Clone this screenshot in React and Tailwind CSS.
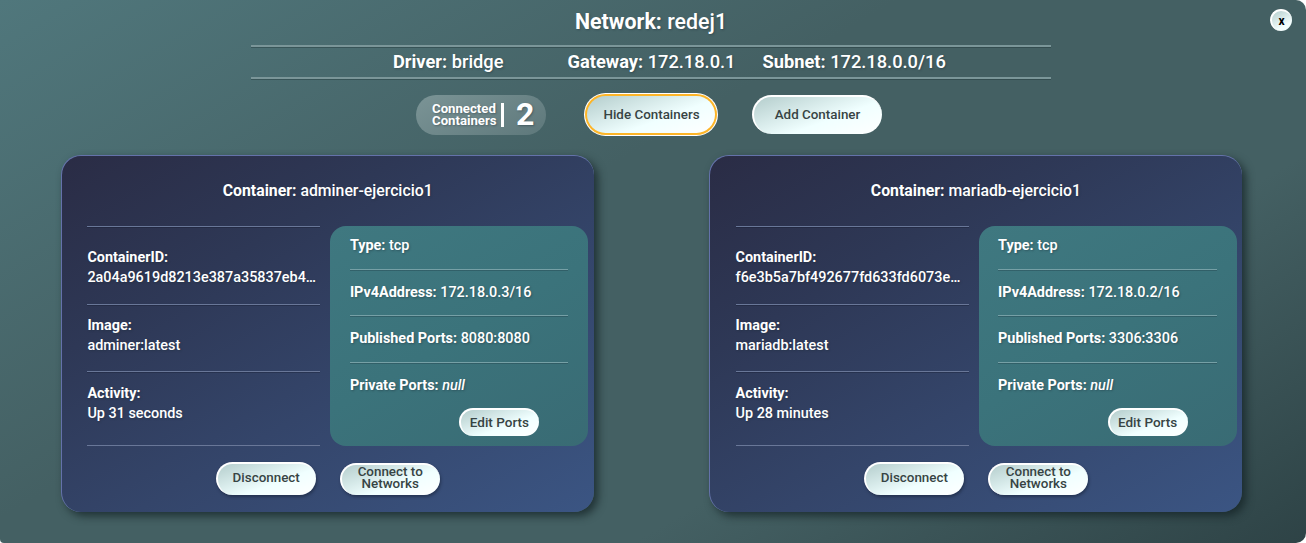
const FACE =
  "flex items-center justify-center rounded-full bg-linear-[160deg,#b4cdcc_0%,#f0ffff_60%,#ffffff_100%] text-center font-medium text-[#374444]";
const PILL = `${FACE} border-t-2 border-l-2 border-white`;
const RULE = "border-t border-[#76a0a6] shadow-[inset_0_1px_0_rgba(25,50,60,0.3)]";

const CONTAINERS = [
  {
    name: "adminer-ejercicio1",
    id: "2a04a9619d8213e387a35837eb4…",
    image: "adminer:latest",
    activity: "Up 31 seconds",
    ip: "172.18.0.3/16",
    ports: "8080:8080",
  },
  {
    name: "mariadb-ejercicio1",
    id: "f6e3b5a7bf492677fd633fd6073e…",
    image: "mariadb:latest",
    activity: "Up 28 minutes",
    ip: "172.18.0.2/16",
    ports: "3306:3306",
  },
];

function Field({ label, value, className }) {
  return (
    <div className={`border-t border-[#697798] shadow-[inset_0_1px_0_rgba(20,25,45,0.35)] ${className}`}>
      <div className="font-bold">{label}</div>
      <div className="whitespace-nowrap">{value}</div>
    </div>
  );
}

function Row({ label, children, className = "" }) {
  return (
    <div className={className}>
      <b>{label}</b> {children}
    </div>
  );
}

function ContainerCard({ item }) {
  return (
    <section className="h-[357px] w-[533px] rounded-[20px] border-t border-l border-[#6472aa] bg-linear-[150deg,#2a2c45_0%,#2e3856_30%,#34456a_60%,#3b5583_100%] text-[14.4px] leading-5 shadow-[4px_4px_8px_rgba(20,35,38,0.75)]">
      <h2 className="h-[70px] pt-[25px] pr-px text-center text-[15.8px] leading-5 font-medium">
        <b>Container:</b> {item.name}
      </h2>
      <div className="flex gap-[10px] pl-[24.2px]">
        <div className="ml-px h-[220px] w-[233px] border-b border-[#697798]">
          <Field label="ContainerID:" value={item.id} className="h-[78px] pt-[21px]" />
          <Field label="Image:" value={item.image} className="h-[67px] pt-[11px]" />
          <Field label="Activity:" value={item.activity} className="pt-[12px]" />
        </div>
        <div className="h-[220px] w-[258px] rounded-[16px] bg-linear-[150deg,#3f7880_0%,#3b737b_50%,#396b74_100%] pr-5 pl-[19.5px]">
          <Row label="Type:" className="h-[43px] pt-[10px]">tcp</Row>
          <Row label="IPv4Address:" className={`h-[46px] pt-[13px] ${RULE}`}>{item.ip}</Row>
          <Row label="Published Ports:" className={`h-[47px] pt-[13px] ${RULE}`}>{item.ports}</Row>
          <Row label="Private Ports:" className={`h-[46px] pt-[13px] ${RULE}`}>
            <i>null</i>
          </Row>
          <button className={`${PILL} ml-[109.5px] h-7 w-20 pr-[2px] pb-[2px] text-[13.5px]`}>Edit Ports</button>
        </div>
      </div>
      <div className="mt-4 flex gap-6 pl-[154px] text-[13.4px] leading-3">
        <button className={`${PILL} h-[33px] w-[100px] pr-[2px] pb-[4px] shadow-[1px_2px_3px_rgba(20,30,50,0.5)]`}>Disconnect</button>
        <button className={`${PILL} mt-px h-8 w-[100px] pr-[2px] pb-[5px] shadow-[1px_2px_3px_rgba(20,30,50,0.5)]`}>
          Connect to<br />Networks
        </button>
      </div>
    </section>
  );
}

export default function App() {
  return (
    <div className="h-[543px] w-[1306px] bg-white">
      <main className="relative h-full overflow-hidden rounded-r-[10px] rounded-bl-[4px] bg-linear-[150deg,#50777c_0%,#446063_40%,#446063_70%,#2e4346_100%] font-['Roboto',sans-serif] font-medium text-white text-shadow-[1px_1px_2px_rgba(30,45,55,0.4)]">
        <button className="absolute top-[9px] left-[1270px] flex size-[22px] items-center justify-center rounded-full border-t-2 border-l-2 border-white bg-linear-[150deg,#b4cdcc,#f4ffff_70%] pr-px pb-px text-[12px] font-bold text-black text-shadow-none">
          x
        </button>
        <h1 className="pt-2 pr-[4px] text-center text-[21.4px] leading-7 font-medium">
          <b>Network:</b> redej1
        </h1>
        <div className="mt-[9px] ml-[251px] flex h-[34px] w-[800px] border-y-2 border-[#7b9699] pl-[142px] text-[18.25px] leading-[30px] font-medium whitespace-nowrap shadow-[inset_0_1px_0_rgba(30,50,52,0.4),0_1px_0_rgba(30,50,52,0.4)]">
          <div className="w-[174.5px]"><b>Driver:</b> bridge</div>
          <div className="w-[195px]"><b>Gateway:</b> 172.18.0.1</div>
          <div><b>Subnet:</b> 172.18.0.0/16</div>
        </div>
        <div className="mt-[14px] flex h-[43px] items-center pl-[416px] text-[13.4px]">
          <div className="flex h-10 w-[130px] items-center rounded-full bg-linear-[150deg,#7b9496,#5e787b] pl-4">
            <div className="w-[69px] text-[13.2px] leading-3 font-bold">Connected<br />Containers</div>
            <div className="h-6 w-[3px] bg-white" />
            <div className="ml-3 pb-px text-[32px] leading-[39px] font-bold">2</div>
          </div>
          <div className="ml-[38px] h-[43px] w-[134px] rounded-full bg-white p-px">
            <div className="h-full rounded-full bg-[#fdb528] p-[2px]">
              <button className={`${FACE} h-full w-full pt-px pl-px`}>Hide Containers</button>
            </div>
          </div>
          <button className={`${PILL} ml-[34px] h-[39px] w-[130px] pr-px`}>Add Container</button>
        </div>
        <div className="mt-[19px] flex gap-[115.2px] pl-[61.2px]">
          {CONTAINERS.map((item) => (
            <ContainerCard key={item.name} item={item} />
          ))}
        </div>
      </main>
    </div>
  );
}
